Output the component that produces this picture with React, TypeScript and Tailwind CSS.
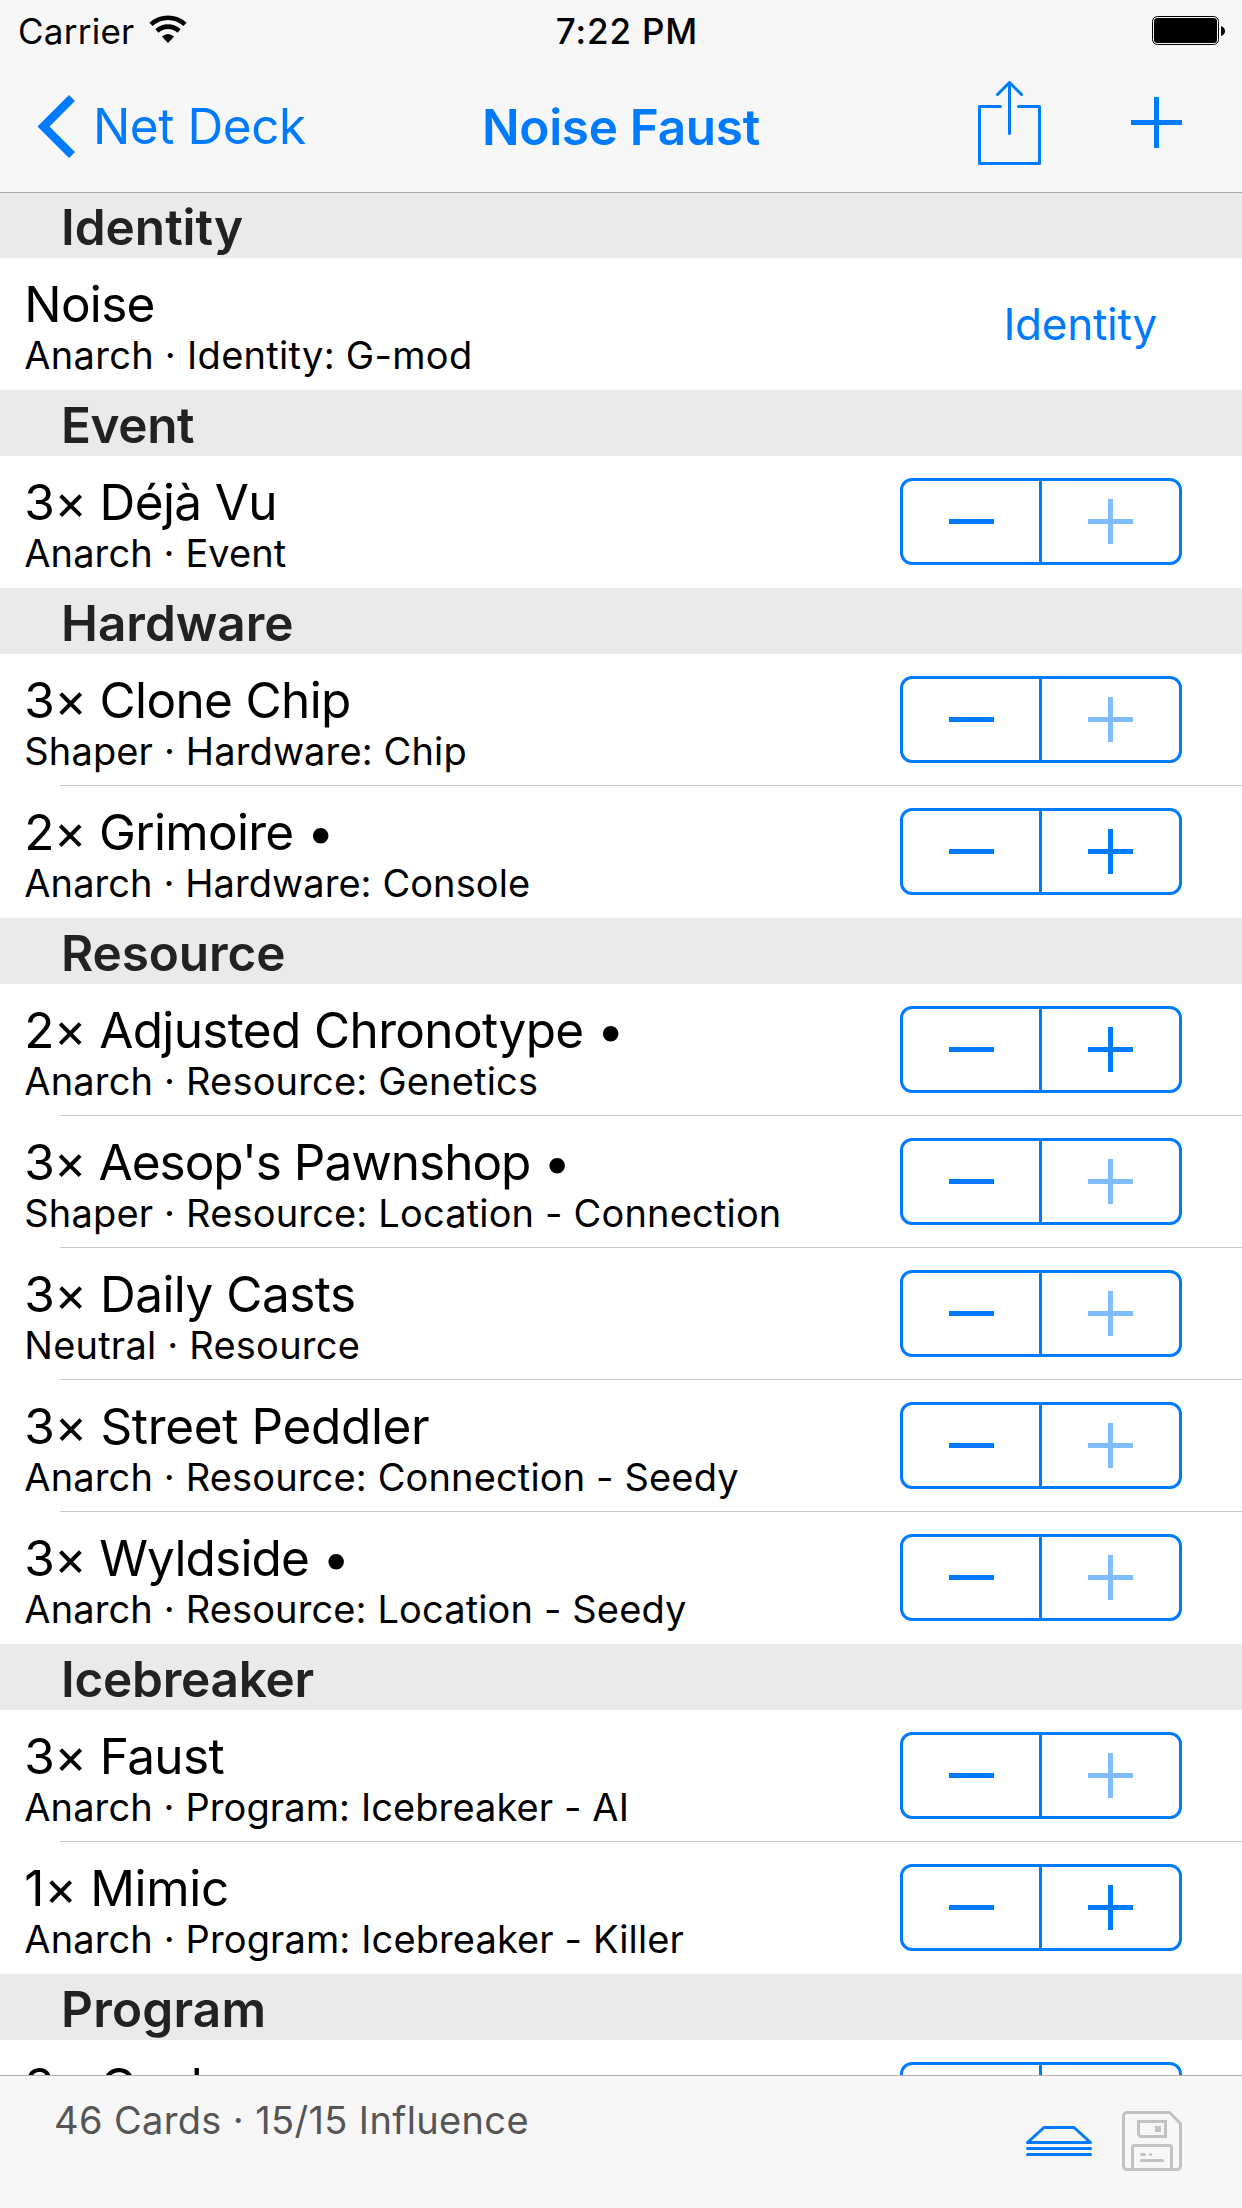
const BLUE = '#007aff';

type Card = { title: string; titleClass: string; detail?: string; detailClass?: string; add?: boolean };
type Section = { name: string; nameClass?: string; cards: Card[] };

const sections: Section[] = [
  {
    name: 'Identity',
    cards: [
      { title: 'Noise', titleClass: 'tracking-[-0.7px]', detail: 'Anarch · Identity: G-mod', detailClass: 'tracking-[0.29px]' },
    ],
  },
  {
    name: 'Event',
    nameClass: 'tracking-[-0.4px]',
    cards: [
      { title: '3× Déjà Vu', titleClass: 'tracking-[-0.65px]', detail: 'Anarch · Event', detailClass: 'tracking-[0.1px]', add: false },
    ],
  },
  {
    name: 'Hardware',
    cards: [
      { title: '3× Clone Chip', titleClass: 'tracking-[-0.65px]', detail: 'Shaper · Hardware: Chip', detailClass: 'tracking-[0.14px]', add: false },
      { title: '2× Grimoire •', titleClass: 'tracking-[-0.7px]', detail: 'Anarch · Hardware: Console', detailClass: 'tracking-[0.08px]', add: true },
    ],
  },
  {
    name: 'Resource',
    nameClass: 'tracking-[-0.1px]',
    cards: [
      { title: '2× Adjusted Chronotype •', titleClass: 'tracking-[-0.65px]', detail: 'Anarch · Resource: Genetics', detailClass: 'tracking-[0.17px]', add: true },
      { title: "3× Aesop's Pawnshop •", titleClass: 'tracking-[-1px]', detail: 'Shaper · Resource: Location - Connection', detailClass: 'tracking-[0.17px]', add: false },
      { title: '3× Daily Casts', titleClass: 'tracking-[-0.53px]', detail: 'Neutral · Resource', detailClass: 'tracking-[0.22px]', add: false },
      { title: '3× Street Peddler', titleClass: 'tracking-[-0.36px]', detail: 'Anarch · Resource: Connection - Seedy', detailClass: 'tracking-[0.14px]', add: false },
      { title: '3× Wyldside •', titleClass: 'tracking-[-0.8px]', detail: 'Anarch · Resource: Location - Seedy', detailClass: 'tracking-[0.13px]', add: false },
    ],
  },
  {
    name: 'Icebreaker',
    nameClass: 'tracking-[-0.25px]',
    cards: [
      { title: '3× Faust', titleClass: 'tracking-[-0.6px]', detail: 'Anarch · Program: Icebreaker - AI', detailClass: 'tracking-[0.1px]', add: false },
      { title: '1× Mimic', titleClass: 'tracking-[-0.3px]', detail: 'Anarch · Program: Icebreaker - Killer', detailClass: 'tracking-[0.12px]', add: true },
    ],
  },
  {
    name: 'Program',
    nameClass: 'tracking-[0.2px]',
    cards: [{ title: '3× Cache', titleClass: 'tracking-[-0.5px]', add: false }],
  },
];

function Stepper({ canAdd }: { canAdd: boolean }) {
  return (
    <div className="flex h-[87px] w-[282px] shrink-0 rounded-[12px] border-3 border-[#007aff]">
      <button className="flex w-[139px] items-center justify-center border-r-3 border-[#007aff] pl-[1px]" aria-label="Remove">
        <svg width="45" height="45" shapeRendering="crispEdges">
          <rect y="20" width="45" height="5" fill={BLUE} />
        </svg>
      </button>
      <button className="flex flex-1 items-center justify-center" aria-label="Add">
        <svg width="45" height="45" shapeRendering="crispEdges">
          <path d="M0 20H20V0H25V20H45V25H25V45H20V25H0Z" fill={canAdd ? BLUE : '#80bdff'} />
        </svg>
      </button>
    </div>
  );
}

function Row({ card, last }: { card: Card; last: boolean }) {
  return (
    <div className="relative flex h-[132px] shrink-0 items-start justify-between bg-white pr-[60px] pl-[24.3px]">
      <div className="pt-[16px] whitespace-nowrap text-black">
        <div className={`text-[49.5px] leading-[60px] ${card.titleClass}`}>{card.title}</div>
        {card.detail && <div className={`text-[38px] leading-[42px] ${card.detailClass ?? ''}`}>{card.detail}</div>}
      </div>
      {card.add === undefined ? (
        <button className="mt-[37px] mr-[25px] text-[44px] leading-[58px] tracking-[-0.25px] text-[#007aff]">Identity</button>
      ) : (
        <div className="pt-[22px]">
          <Stepper canAdd={card.add} />
        </div>
      )}
      {!last && <div className="absolute right-0 bottom-0 left-[60px] h-px bg-[#c8c7cc]" />}
    </div>
  );
}

export default function App() {
  return (
    <div className="flex h-[2208px] w-[1242px] flex-col overflow-hidden bg-white font-['Inter',sans-serif]">
      <header className="flex h-[193px] shrink-0 flex-col border-b border-[#a7a7aa] bg-[#f7f7f8]">
        <div className="grid h-[60px] grid-cols-3 items-start pr-[16px] pl-[18px] text-black">
          <div className="flex items-start">
            <span className="mt-[9px] text-[35px] leading-[44px] tracking-[0.25px]">Carrier</span>
            <svg className="mt-[15px] ml-[15px]" width="38" height="29" viewBox="0 0 38 29">
              <path d="M2 9.4A25 25 0 0 1 36 9.4" fill="none" stroke="#000" strokeWidth="4.6" />
              <path d="M8 16A16 16 0 0 1 30 16" fill="none" stroke="#000" strokeWidth="4.6" />
              <path d="M12.800 21.600Q19 16.600 25.200 21.600L19 28Z" fill="#000" />
            </svg>
          </div>
          <span className="mt-[9px] ml-[10px] text-center text-[35px] leading-[44px] font-medium tracking-[0.85px] whitespace-nowrap">7:22 PM</span>
          <svg className="mt-[16px] justify-self-end" width="74" height="29" viewBox="0 0 74 29">
            <rect x="0.5" y="0.5" width="66" height="28" rx="5" fill="none" stroke="#000" />
            <rect x="2" y="2" width="63" height="25" rx="3.500" fill="#000" />
            <path d="M69 10Q73 11.500 73 15T69 20Z" fill="#000" />
          </svg>
        </div>
        <div className="flex h-[132px] items-start">
          <div className="flex w-[420px] items-start text-[#007aff]">
            <svg className="mt-[35px] ml-[37px] shrink-0" width="38" height="63" viewBox="0 0 38 63">
              <path d="M35 3L6.500 31.500L35 60" fill="none" stroke={BLUE} strokeWidth="8.500" />
            </svg>
            <span className="mt-[36px] ml-[18px] text-[49.5px] leading-[60px] tracking-[-0.44px] whitespace-nowrap">Net Deck</span>
          </div>
          <h1 className="mt-[37px] w-[402px] text-center text-[49.5px] leading-[60px] font-semibold tracking-[-0.3px] whitespace-nowrap text-[#007aff]">
            Noise Faust
          </h1>
          <svg className="mt-[21px] ml-[156px] shrink-0" width="63" height="84" viewBox="0 0 63 84" fill="none" stroke={BLUE} strokeWidth="3" strokeLinecap="round" strokeLinejoin="round">
            <path d="M22.500 25.500H1.500V82.500H61.500V25.500H40.500M31.500 52.500V1.500M19.500 13.500L31.500 1.500L43.500 13.500" />
          </svg>
          <svg className="mt-[37px] ml-[90px] shrink-0" width="51" height="51" shapeRendering="crispEdges">
            <path d="M0 23H23V0H28V23H51V28H28V51H23V28H0Z" fill={BLUE} />
          </svg>
        </div>
      </header>

      <main className="-mt-px flex h-[1883px] shrink-0 flex-col overflow-hidden">
        {sections.map((section, index) => (
          <section key={section.name} className="shrink-0">
            <h2
              className={`h-[66px] bg-[#eaeaea] pl-[61px] text-[49.5px] leading-[62px] font-semibold text-[#222] ${
                index === 0 ? 'border-t border-[#a7a7aa] pt-[3px]' : 'pt-[4px]'
              } ${section.nameClass ?? ''}`}
            >
              {section.name}
            </h2>
            {section.cards.map((card, i) => (
              <Row key={card.title} card={card} last={i === section.cards.length - 1} />
            ))}
          </section>
        ))}
      </main>

      <footer className="flex flex-1 items-start border-t border-[#b2b2b4] bg-[#f7f7f8]">
        <span className="mt-[21px] ml-[54px] w-[972px] text-[38px] leading-[46px] tracking-[0.36px] whitespace-nowrap text-[#555]">
          46 Cards · 15/15 Influence
        </span>
        <svg className="mt-[50px] -ml-px shrink-0" width="68" height="31" viewBox="0 0 68 31" fill="none" stroke={BLUE} strokeWidth="3" strokeLinecap="round" strokeLinejoin="round">
          <path d="M2.500 16.500L19 1.500H49L65.500 16.500ZM2.500 22.500H65.500M2.500 28.500H65.500" />
        </svg>
        <svg className="mt-[35px] ml-[29px] shrink-0" width="60" height="60" viewBox="0 0 60 60" fill="none" stroke="#c2c2c2" strokeWidth="3" strokeLinejoin="round" strokeLinecap="round">
          <path d="M5.500 1.500H47.500L58.500 12.500V54.500Q58.500 58.500 54.500 58.500H5.500Q1.500 58.500 1.500 54.500V5.500Q1.500 1.500 5.500 1.500Z" />
          <path d="M16.500 10.500H43.500V25.500H18.500L16.500 23.500Z" strokeLinejoin="miter" />
          <rect x="33" y="15" width="6" height="6" fill="#c2c2c2" stroke="none" />
          <path d="M10.500 58V36.500Q10.500 34.500 12.500 34.500H47.500Q49.500 34.500 49.500 36.500V58M19.500 43.500H22.500M28.500 43.500H28.600M19.500 49.500H40.500" />
        </svg>
      </footer>
    </div>
  );
}
